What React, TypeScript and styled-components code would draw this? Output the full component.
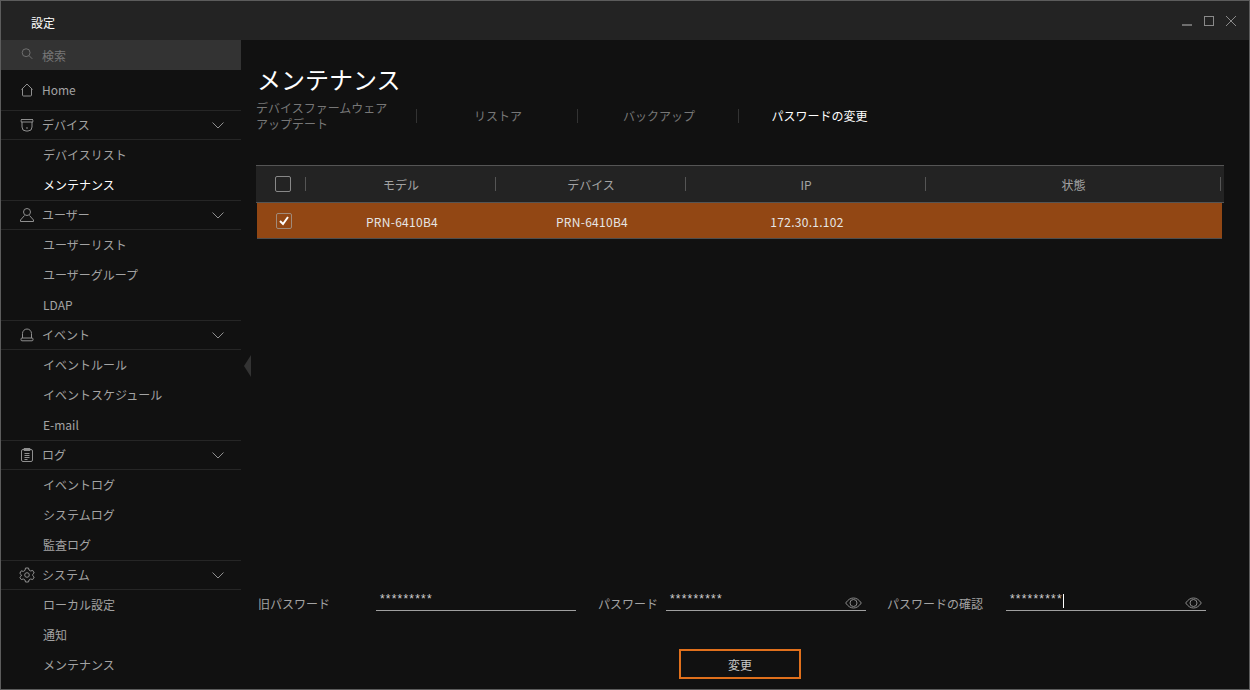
import { ReactNode } from "react";
import styled, { createGlobalStyle } from "styled-components";

const GlobalStyle = createGlobalStyle`
  html, body {
    margin: 0;
    padding: 0;
    background: #111111;
  }
  * {
    box-sizing: border-box;
  }
`;

const Icon = ({ children, size = 16 }: { children: ReactNode; size?: number }) => (
  <svg
    width={size}
    height={size}
    viewBox="0 0 16 16"
    fill="none"
    stroke="currentColor"
    strokeWidth="1"
  >
    {children}
  </svg>
);

const HomeIcon = () => (
  <Icon>
    <path d="M2.5 7.5 8 2l5.500 5.500" />
    <path d="M3.500 7v6a1 1 0 0 0 1 1h7a1 1 0 0 0 1-1V7" />
  </Icon>
);

const DeviceIcon = () => (
  <Icon>
    <path d="M2 2.500h12M2 5h12" />
    <path d="M2.500 2.500c-.5 0-.5 2.500 0 2.500M13.500 2.500c.5 0 .5 2.500 0 2.500" />
    <path d="M3 5v5a4 4 0 0 0 4 4h2a4 4 0 0 0 4-4V5" />
    <circle cx="8" cy="11" r=".4" />
  </Icon>
);

const UserIcon = () => (
  <Icon>
    <circle cx="8" cy="5" r="3.500" />
    <path d="M5.500 8.500 1.500 13v1.500h13V13l-4-4.500" />
  </Icon>
);

const BellIcon = () => (
  <Icon>
    <path d="M3.500 11V6.500a4.500 4.500 0 0 1 9 0V11" />
    <rect x="2" y="11" width="12" height="2.800" rx="1" />
  </Icon>
);

const LogIcon = () => (
  <Icon>
    <rect x="2.500" y="2.500" width="11" height="12" rx="1.500" />
    <path d="M5 1.500h6v2H5z" />
    <path d="M5.500 6.500h5M5.500 8.500h5M5.500 10.500h5M5.500 12.500h3" />
  </Icon>
);

const GearIcon = () => (
  <Icon size={16}>
    <circle cx="8" cy="8" r="2.300" />
    <path d="M6.500 1h3l.5 2 1.700 1 2-.6 1.500 2.600-1.500 1.400v1.200l1.500 1.400-1.500 2.600-2-.6-1.700 1-.5 2h-3l-.5-2-1.700-1-2 .6L.8 10.400l1.500-1.400V7.800L.8 6.400l1.500-2.600 2 .6L6 3.400z" />
  </Icon>
);

const SearchIcon = () => (
  <Icon size={14}>
    <circle cx="7" cy="6.500" r="4.500" />
    <path d="m10.500 10 3.500 3.500" />
  </Icon>
);

const ChevronIcon = () => (
  <svg width="12" height="7" viewBox="0 0 12 7" fill="none" stroke="currentColor">
    <path d="M.5.500 6 6 11.500.500" />
  </svg>
);

const EyeIcon = () => (
  <svg width="17" height="12" viewBox="0 0 17 12" fill="none" stroke="currentColor">
    <path d="M.7 6c2.300-3.300 4.800-5 7.800-5s5.500 1.700 7.800 5c-2.300 3.300-4.800 5-7.800 5S3 9.300.7 6z" />
    <circle cx="8.500" cy="6" r="3.500" />
  </svg>
);

const sections = [
  { title: "デバイス", icon: <DeviceIcon />, items: ["デバイスリスト", "メンテナンス"] },
  { title: "ユーザー", icon: <UserIcon />, items: ["ユーザーリスト", "ユーザーグループ", "LDAP"] },
  { title: "イベント", icon: <BellIcon />, items: ["イベントルール", "イベントスケジュール", "E-mail"] },
  { title: "ログ", icon: <LogIcon />, items: ["イベントログ", "システムログ", "監査ログ"] },
  { title: "システム", icon: <GearIcon />, items: ["ローカル設定", "通知", "メンテナンス"] },
];

const tabs = ["デバイスファームウェア アップデート", "リストア", "バックアップ", "パスワードの変更"];

const fields = [
  { label: "旧パスワード", value: "*********", eye: false, caret: false, labelWidth: 118, gap: 0 },
  { label: "パスワード", value: "*********", eye: true, caret: false, labelWidth: 68, gap: 22 },
  { label: "パスワードの確認", value: "*********", eye: true, caret: true, labelWidth: 119, gap: 21 },
];

const App = () => (
  <Window>
    <GlobalStyle />
    <TitleBar>
      <TitleText>設定</TitleText>
      <WindowControls>
        <MinimizeButton />
        <MaximizeButton />
        <CloseButton>
          <svg width="10" height="10" viewBox="0 0 10 10" stroke="currentColor" fill="none">
            <path d="m0 0 10 10M10 0 0 10" />
          </svg>
        </CloseButton>
      </WindowControls>
    </TitleBar>
    <Body>
      <Sidebar>
        <SearchBar>
          <SearchGlyph>
            <SearchIcon />
          </SearchGlyph>
          検索
        </SearchBar>
        <HomeRow>
          <IconSlot>
            <HomeIcon />
          </IconSlot>
          Home
        </HomeRow>
        {sections.map((section) => (
          <section key={section.title}>
            <GroupHeader>
              <IconSlot>{section.icon}</IconSlot>
              {section.title}
              <ChevronSlot>
                <ChevronIcon />
              </ChevronSlot>
            </GroupHeader>
            {section.items.map((item, i) => (
              <NavItem key={item} $active={section.title === "デバイス" && i === 1}>
                {item}
              </NavItem>
            ))}
          </section>
        ))}
        <CollapseHandle />
      </Sidebar>
      <Main>
        <PageTitle>メンテナンス</PageTitle>
        <TabBar>
          {tabs.map((tab, i) => (
            <Tab key={tab} $active={i === 3} $first={i === 0}>
              {tab}
            </Tab>
          ))}
        </TabBar>
        <Table>
          <HeaderRow>
            <HeaderCell>
              <CheckBox />
            </HeaderCell>
            <HeaderCell>モデル</HeaderCell>
            <HeaderCell>デバイス</HeaderCell>
            <HeaderCell>IP</HeaderCell>
            <HeaderCell>状態</HeaderCell>
          </HeaderRow>
          <DataRow>
            <DataCell>
              <CheckBox $checked>
                <svg width="12" height="12" viewBox="0 0 12 12" fill="none" stroke="#fff" strokeWidth="2">
                  <path d="m2 6 3 3 5-7" />
                </svg>
              </CheckBox>
            </DataCell>
            <DataCell>PRN-6410B4</DataCell>
            <DataCell>PRN-6410B4</DataCell>
            <DataCell>172.30.1.102</DataCell>
            <DataCell />
          </DataRow>
        </Table>
        <Form>
          {fields.map((field) => (
            <Field key={field.label} $gap={field.gap}>
              <FieldLabel $width={field.labelWidth}>{field.label}</FieldLabel>
              <FieldInput>
                <Stars>{field.value}</Stars>
                {field.caret && <Caret />}
                {field.eye && (
                  <EyeSlot>
                    <EyeIcon />
                  </EyeSlot>
                )}
              </FieldInput>
            </Field>
          ))}
        </Form>
        <Actions>
          <ChangeButton>変更</ChangeButton>
        </Actions>
      </Main>
    </Body>
  </Window>
);

const Window = styled.div`
  width: 1250px;
  height: 690px;
  display: flex;
  flex-direction: column;
  overflow: hidden;
  background: #111111;
  border: 1px solid #5c5c5c;
  font-family: "Noto Sans CJK JP", "Noto Sans", sans-serif;
  font-size: 12px;
  color: #a3a3a3;
`;

const TitleBar = styled.div`
  height: 39px;
  flex: none;
  display: flex;
  align-items: center;
  justify-content: space-between;
  padding: 0 13px 0 30px;
  background: #232323;
`;

const TitleText = styled.div`
  color: #ffffff;
  font-size: 12px;
  padding-top: 4px;
`;

const WindowControls = styled.div`
  display: flex;
  align-items: center;
  gap: 12px;
  color: #8a8a8a;
`;

const MinimizeButton = styled.div`
  width: 10px;
  height: 2px;
  margin-top: 9px;
  background: #6e6e6e;
`;

const MaximizeButton = styled.div`
  width: 10px;
  height: 10px;
  margin-top: 1px;
  border: 1px solid #8a8a8a;
`;

const CloseButton = styled.div`
  width: 10px;
  height: 10px;
  margin-top: 1px;
  display: flex;
`;

const Body = styled.div`
  flex: 1;
  display: flex;
  min-height: 0;
`;

const Sidebar = styled.nav`
  width: 240px;
  flex: none;
  position: relative;
`;

const SearchBar = styled.div`
  height: 30px;
  display: flex;
  align-items: center;
  padding-left: 41px;
  position: relative;
  background: #333333;
  color: #777777;
`;

const SearchGlyph = styled.span`
  position: absolute;
  left: 19px;
  top: 7px;
  display: flex;
  color: #777777;
`;

const IconSlot = styled.span`
  width: 23px;
  margin-left: 18px;
  margin-top: 2px;
  display: flex;
  align-items: center;
  color: #8f8f8f;
`;

const HomeRow = styled.div`
  height: 40px;
  display: flex;
  align-items: center;
  padding-bottom: 2px;
`;

const GroupHeader = styled.div`
  height: 30px;
  display: flex;
  align-items: center;
  padding-bottom: 2px;
  border-top: 1px solid #262626;
  border-bottom: 1px solid #262626;
`;

const ChevronSlot = styled.span`
  margin-left: auto;
  margin-right: 17px;
  margin-top: 2px;
  display: flex;
  color: #8f8f8f;
`;

const NavItem = styled.div<{ $active?: boolean }>`
  height: 30px;
  display: flex;
  align-items: center;
  padding-left: 42px;
  padding-bottom: 2px;
  color: ${({ $active }) => ($active ? "#ffffff" : "#a3a3a3")};
`;

const CollapseHandle = styled.div`
  position: absolute;
  left: 243px;
  top: 315px;
  border-style: solid;
  border-width: 11px 7px 11px 0;
  border-color: transparent #333333 transparent transparent;
`;

const Main = styled.main`
  flex: 1;
  min-width: 0;
  display: flex;
  flex-direction: column;
  padding: 21px 0 10px 15px;
`;

const PageTitle = styled.h1`
  margin: 0;
  height: 36px;
  font-size: 24px;
  font-weight: 400;
  line-height: 36px;
  color: #ffffff;
  padding-left: 1px;
`;

const TabBar = styled.div`
  display: flex;
  align-items: center;
  margin-top: 3px;
  height: 32px;
`;

const Tab = styled.div<{ $active?: boolean; $first?: boolean }>`
  width: 161px;
  height: 14px;
  display: flex;
  align-items: center;
  line-height: ${({ $first }) => ($first ? "16.5px" : "16px")};
  justify-content: ${({ $first }) => ($first ? "flex-start" : "center")};
  padding: ${({ $first, $active }) => ($first ? "0 20px 0 0" : $active ? "0" : "0 0 0 2px")};
  color: ${({ $active }) => ($active ? "#ffffff" : "#777777")};
  border-right: ${({ $active }) => ($active ? "none" : "1px solid #333333")};
`;

const Table = styled.div`
  width: 968px;
  margin-top: 33px;
`;

const HeaderRow = styled.div`
  height: 38px;
  display: grid;
  grid-template-columns: 50px 190px 190px 240px 295px;
  background: #232323;
  border-top: 1px solid #555555;
  border-bottom: 1px solid #555555;
  color: #a3a3a3;
`;

const HeaderCell = styled.div`
  display: flex;
  align-items: center;
  justify-content: center;
  position: relative;
  &::after {
    content: "";
    position: absolute;
    right: 0;
    top: 11px;
    width: 1px;
    height: 14px;
    background: #555555;
  }
`;

const DataRow = styled.div`
  height: 36px;
  width: 965px;
  margin-left: 1px;
  display: grid;
  grid-template-columns: 49px 190px 190px 240px 296px;
  background: #924714;
  border-bottom: 1px solid #4d4d4d;
  color: #e6e6e6;
  letter-spacing: 0.28px;
`;

const DataCell = styled.div`
  display: flex;
  align-items: center;
  justify-content: center;
  padding: 2px 0 0 2px;
`;

const CheckBox = styled.div<{ $checked?: boolean }>`
  width: 16px;
  height: 16px;
  display: flex;
  align-items: center;
  justify-content: center;
  border: 1px solid ${({ $checked }) => ($checked ? "#a08a7a" : "#888888")};
  border-radius: 2px;
  margin-left: ${({ $checked }) => ($checked ? "3px" : "4px")};
  margin-bottom: ${({ $checked }) => ($checked ? "2px" : "0")};
`;

const Form = styled.div`
  margin-top: auto;
  display: flex;
  align-items: flex-end;
  padding-left: 2px;
`;

const Field = styled.div<{ $gap: number }>`
  display: flex;
  align-items: flex-end;
  margin-left: ${({ $gap }) => $gap}px;
`;

const FieldLabel = styled.label<{ $width: number }>`
  width: ${({ $width }) => $width}px;
  line-height: 14px;
  color: #a3a3a3;
`;

const FieldInput = styled.div`
  width: 200px;
  height: 24px;
  position: relative;
  display: flex;
  align-items: flex-start;
  padding-left: 4px;
  border-bottom: 1px solid #a0a0a0;
`;

const Stars = styled.span`
  margin-top: 5px;
  font-family: "Liberation Sans", sans-serif;
  font-size: 12px;
  line-height: 14px;
  letter-spacing: 1.2px;
  color: #d0d0d0;
`;

const Caret = styled.span`
  width: 1px;
  height: 14px;
  margin-top: 7px;
  background: #ffffff;
`;

const EyeSlot = styled.span`
  position: absolute;
  right: 4px;
  top: 10px;
  display: flex;
  color: #8a8a8a;
`;

const Actions = styled.div`
  display: flex;
  justify-content: center;
  margin-top: 38px;
  padding-right: 25px;
`;

const ChangeButton = styled.button`
  width: 122px;
  height: 30px;
  background: transparent;
  border: 2px solid #e0701c;
  color: #c8c8c8;
  font: inherit;
  padding: 0;
`;

export default App;
